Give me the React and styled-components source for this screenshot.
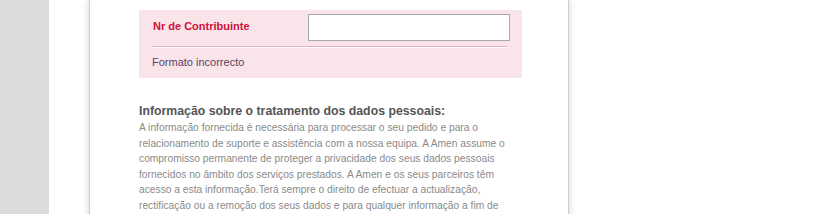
import styled, { createGlobalStyle } from 'styled-components'

const GlobalStyle = createGlobalStyle`
  html, body {
    margin: 0;
    padding: 0;
    background: #ffffff;
    font-family: "Liberation Sans", Arial, sans-serif;
  }
`

const App = () => {
  return (
    <>
      <GlobalStyle />
      <Layout>
        <Sidebar />
        <Main>
          <Panel>
            <ErrorBox>
              <FieldRow>
                <Label>Nr de Contribuinte</Label>
                <Input type="text" />
              </FieldRow>
              <Divider />
              <ErrorMessage>Formato incorrecto</ErrorMessage>
            </ErrorBox>
            <Privacy>
              <PrivacyTitle>Informação sobre o tratamento dos dados pessoais:</PrivacyTitle>
              <PrivacyText>
                A informação fornecida é necessária para processar o seu pedido e para o
                relacionamento de suporte e assistência com a nossa equipa. A Amen assume o
                compromisso permanente de proteger a privacidade dos seus dados pessoais
                fornecidos no âmbito dos serviços prestados. A Amen e os seus parceiros têm
                acesso a esta informação.Terá sempre o direito de efectuar a actualização,
                rectificação ou a remoção dos seus dados e para qualquer informação a fim de
              </PrivacyText>
            </Privacy>
          </Panel>
        </Main>
      </Layout>
    </>
  )
}

export default App

const Layout = styled.div`
  display: flex;
  height: 214px;
  overflow: hidden;
`

const Sidebar = styled.div`
  width: 49px;
  flex-shrink: 0;
  background-color: #dcdcdc;
`

const Main = styled.div`
  flex: 1;
  padding-left: 40px;
`

const Panel = styled.div`
  box-sizing: border-box;
  width: 480px;
  min-height: 300px;
  padding: 10px 46px 0 49px;
  background: #ffffff;
  border-left: 1px solid #cfcfcf;
  border-right: 1px solid #cfcfcf;
  box-shadow: 0 0 7px rgba(0, 0, 0, 0.18);
`

const ErrorBox = styled.div`
  background-color: #f9e4e9;
  padding: 4px 12px 8px 13px;
`

const FieldRow = styled.div`
  display: flex;
  justify-content: space-between;
  align-items: flex-start;
`

const Label = styled.label`
  padding: 4px 0 0 1px;
  font-size: 11px;
  line-height: 16px;
  font-weight: bold;
  color: #d0103c;
`

const Input = styled.input`
  box-sizing: border-box;
  width: 202px;
  height: 27px;
  margin: 0;
  border: 1px solid #a9a9a9;
  background: #ffffff;
  outline: none;
`

const Divider = styled.div`
  margin: 5px 3px 0 0;
  border-top: 1px solid #e8b0be;
  border-bottom: 1px solid #ffffff;
`

const ErrorMessage = styled.div`
  margin-top: 6px;
  font-size: 11px;
  line-height: 16px;
  color: #5a4566;
`

const Privacy = styled.div`
  margin-top: 25px;
`

const PrivacyTitle = styled.h3`
  margin: 0 0 1px;
  font-size: 12.3px;
  line-height: 16px;
  font-weight: bold;
  color: #555555;
`

const PrivacyText = styled.p`
  width: 376px;
  margin: 0;
  font-size: 10.25px;
  line-height: 15.6px;
  color: #8a8a8a;
`
